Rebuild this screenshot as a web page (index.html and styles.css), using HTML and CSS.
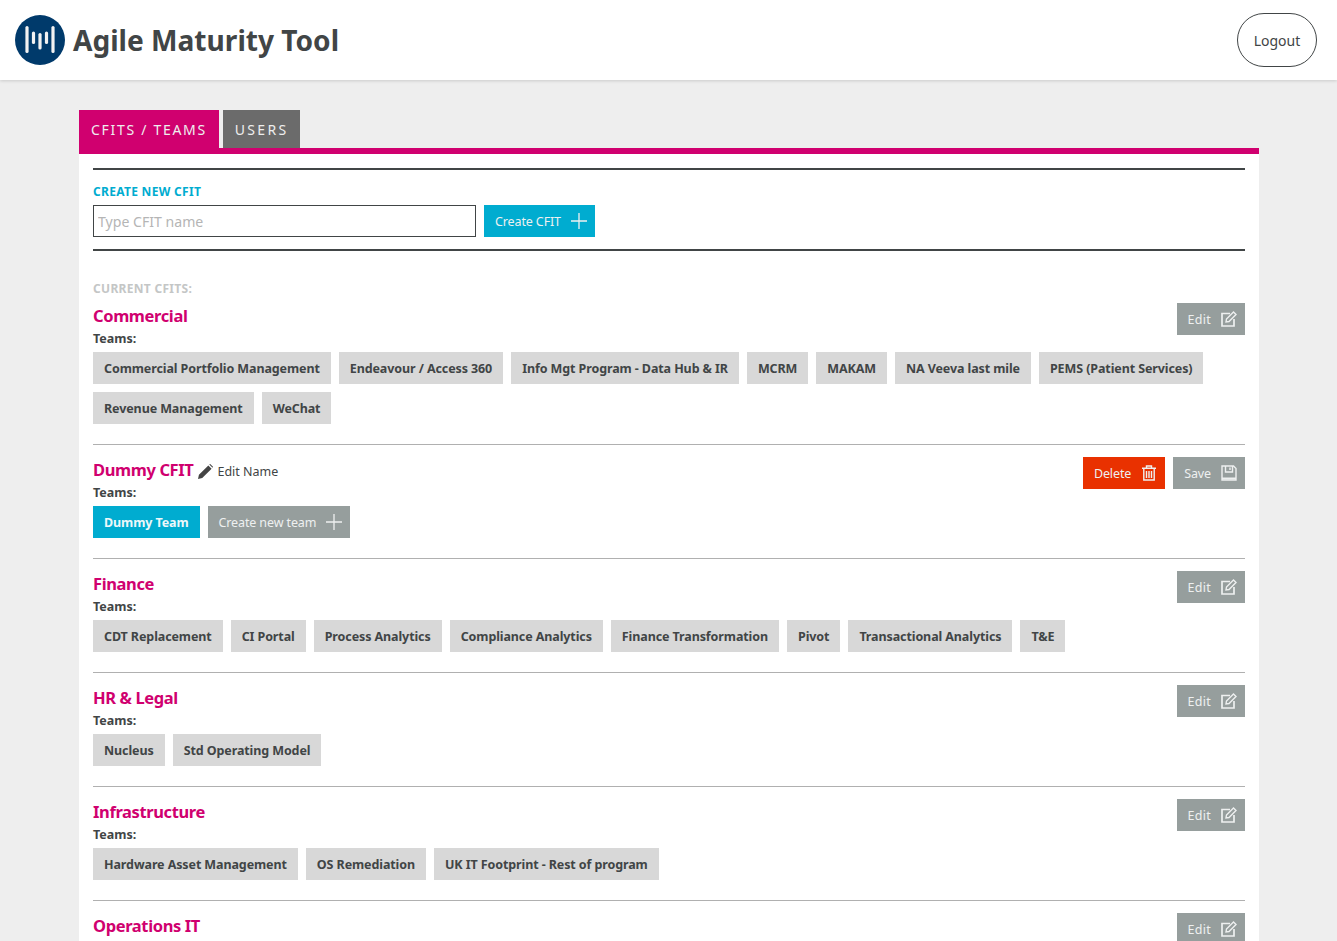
FILE: index.html
```html
<!DOCTYPE html>
<html lang="en">
<head>
    <meta charset="UTF-8">
    <title>Agile Maturity Tool</title>
    <link rel="stylesheet" href="styles.css">
</head>
<body>
    <svg class="icon-defs" width="0" height="0">
        <symbol id="i-plus" viewBox="0 0 16 16"><path d="M8 0v16M0 8h16" fill="none" stroke="currentColor" stroke-width="1.3"/></symbol>
        <symbol id="i-edit" viewBox="0 0 16 16"><path d="M9 2.500H1v12.500h12V8" fill="none" stroke="currentColor" stroke-width="1.700"/><path d="M5.500 8 12.500 1l2.500 2.500-7 7-3 .5z" fill="none" stroke="currentColor" stroke-width="1.400"/></symbol>
        <symbol id="i-trash" viewBox="0 0 14 16"><path d="M0 3.200h14M4.500 3V1h5v2M1.800 3.500V15h10.400V3.500M4.500 6v7M7 6v7M9.500 6v7" fill="none" stroke="currentColor" stroke-width="1.400"/></symbol>
        <symbol id="i-save" viewBox="0 0 16 16"><path d="M1 1h11.500L15 3.500V15H1zM4.500 1v6h7V1M9 2.500v2.500" fill="none" stroke="currentColor" stroke-width="1.400"/><path d="M1 13.500h14" stroke="currentColor" stroke-width="2"/></symbol>
    </svg>

    <header class="topbar">
        <div class="brand">
            <svg class="logo" viewBox="0 0 50 50">
                <circle cx="25" cy="25" r="25" fill="#003a6b"/>
                <g fill="none" stroke="#f2f2f2" stroke-linecap="round" stroke-width="3.200">
                    <path d="M12 12.500v24"/>
                    <path d="M18.500 18v9.500"/>
                    <path d="M25 19.500v13.500"/>
                    <path d="M31.500 18v9.500"/>
                    <path d="M38 12.500v24"/>
                </g>
            </svg>
            <h1>Agile Maturity Tool</h1>
        </div>
        <button class="logout">Logout</button>
    </header>

    <main class="page">
        <nav class="tabs">
            <a class="tab tab-active">CFITS / TEAMS</a>
            <a class="tab">USERS</a>
        </nav>

        <div class="panel">
            <section class="create">
                <label class="create-label">CREATE NEW CFIT</label>
                <div class="create-row">
                    <input class="cfit-input" type="text" placeholder="Type CFIT name">
                    <button class="btn btn-blue">Create CFIT <svg class="ic"><use href="#i-plus"/></svg></button>
                </div>
            </section>

            <h2 class="current-label">CURRENT CFITS:</h2>

            <article class="cfit">
                <div class="cfit-head">
                    <h3>Commercial</h3>
                    <button class="btn btn-grey btn-edit">Edit <svg class="ic"><use href="#i-edit"/></svg></button>
                </div>
                <p class="teams-label">Teams:</p>
                <div class="chips">
                    <span class="chip">Commercial Portfolio Management</span>
                    <span class="chip">Endeavour / Access 360</span>
                    <span class="chip">Info Mgt Program - Data Hub &amp; IR</span>
                    <span class="chip">MCRM</span>
                    <span class="chip">MAKAM</span>
                    <span class="chip">NA Veeva last mile</span>
                    <span class="chip">PEMS (Patient Services)</span>
                    <span class="chip">Revenue Management</span>
                    <span class="chip">WeChat</span>
                </div>
            </article>

            <article class="cfit">
                <div class="cfit-head">
                    <h3>Dummy CFIT</h3>
                    <svg class="pencil" viewBox="0 0 16 16"><path d="M0 16l1-4.500L11 1.500l3.500 3.500L4.500 15zM12 .5l1-.5 3 3-.5 1z" fill="#444"/></svg>
                    <span class="edit-name">Edit Name</span>
                    <div class="head-actions">
                        <button class="btn btn-red">Delete <svg class="ic"><use href="#i-trash"/></svg></button>
                        <button class="btn btn-grey">Save <svg class="ic"><use href="#i-save"/></svg></button>
                    </div>
                </div>
                <p class="teams-label">Teams:</p>
                <div class="chips">
                    <span class="chip chip-blue">Dummy Team</span>
                    <button class="btn btn-grey">Create new team <svg class="ic"><use href="#i-plus"/></svg></button>
                </div>
            </article>

            <article class="cfit">
                <div class="cfit-head">
                    <h3>Finance</h3>
                    <button class="btn btn-grey btn-edit">Edit <svg class="ic"><use href="#i-edit"/></svg></button>
                </div>
                <p class="teams-label">Teams:</p>
                <div class="chips">
                    <span class="chip">CDT Replacement</span>
                    <span class="chip">CI Portal</span>
                    <span class="chip">Process Analytics</span>
                    <span class="chip">Compliance Analytics</span>
                    <span class="chip">Finance Transformation</span>
                    <span class="chip">Pivot</span>
                    <span class="chip">Transactional Analytics</span>
                    <span class="chip">T&amp;E</span>
                </div>
            </article>

            <article class="cfit">
                <div class="cfit-head">
                    <h3>HR &amp; Legal</h3>
                    <button class="btn btn-grey btn-edit">Edit <svg class="ic"><use href="#i-edit"/></svg></button>
                </div>
                <p class="teams-label">Teams:</p>
                <div class="chips">
                    <span class="chip">Nucleus</span>
                    <span class="chip">Std Operating Model</span>
                </div>
            </article>

            <article class="cfit">
                <div class="cfit-head">
                    <h3>Infrastructure</h3>
                    <button class="btn btn-grey btn-edit">Edit <svg class="ic"><use href="#i-edit"/></svg></button>
                </div>
                <p class="teams-label">Teams:</p>
                <div class="chips">
                    <span class="chip">Hardware Asset Management</span>
                    <span class="chip">OS Remediation</span>
                    <span class="chip">UK IT Footprint - Rest of program</span>
                </div>
            </article>

            <article class="cfit">
                <div class="cfit-head">
                    <h3>Operations IT</h3>
                    <button class="btn btn-grey btn-edit">Edit <svg class="ic"><use href="#i-edit"/></svg></button>
                </div>
            </article>
        </div>
    </main>
</body>
</html>
```

FILE: styles.css
```css
html, body {
    height: 941px;
    overflow: hidden;
}
body {
    font-family: "Noto Sans", sans-serif;
    margin: 0;
    background-color: #eeeeee;
    color: #414546;
}
button, input {
    font-family: inherit;
}
.icon-defs {
    position: absolute;
}

.topbar {
    height: 80px;
    background: white;
    box-shadow: 0 1px 3px rgba(0, 0, 0, 0.15);
    display: flex;
    align-items: center;
    justify-content: space-between;
    padding: 0 20px 0 15px;
}
.brand {
    display: flex;
    align-items: center;
    gap: 8px;
}
.logo {
    width: 50px;
    height: 50px;
}
.brand h1 {
    margin: 0 0 1px;
    font-size: 28.100px;
    font-weight: 700;
}
.logout {
    width: 80px;
    height: 54px;
    border: 1px solid #414546;
    border-radius: 27px;
    background: white;
    color: #414546;
    font-size: 14px;
}

.page {
    margin: 30px 78px 0 79px;
}
.tabs {
    display: flex;
    gap: 4px;
    height: 38px;
}
.tab {
    display: block;
    padding: 0 12px;
    line-height: 39px;
    font-size: 14px;
    letter-spacing: 1.7px;
    color: #eee;
    background: #6b6b6b;
}
.tab + .tab {
    letter-spacing: 2.300px;
}
.tab-active {
    background: #d0006f;
}

.panel {
    background: white;
    border-top: 6px solid #d0006f;
    padding: 14px 14px 0;
}
.create {
    border-top: 2px solid #414546;
    border-bottom: 2px solid #414546;
    height: 83px;
    box-sizing: border-box;
    padding-top: 14px;
    margin-bottom: 30px;
}
.create-label {
    display: block;
    font-size: 12px;
    font-weight: 700;
    letter-spacing: 0.3px;
    color: #00acd0;
    line-height: 16px;
}
.create-row {
    display: flex;
    gap: 8px;
    margin-top: 5px;
}
.cfit-input {
    width: 383px;
    height: 32px;
    box-sizing: border-box;
    border: 1px solid #414546;
    padding: 0 4px;
    font-size: 14.100px;
    outline: none;
}
.cfit-input::placeholder {
    color: #b5b5b5;
}

.btn {
    height: 32px;
    border: 0;
    padding: 0 8px 0 11px;
    display: inline-flex;
    align-items: center;
    gap: 10px;
    font-size: 12.500px;
    letter-spacing: -0.12px;
    color: #eef0f0;
    white-space: nowrap;
}
.btn-edit {
    letter-spacing: 0.25px;
}
.btn-blue {
    background: #00acd0;
}
.btn-grey {
    background: #969e9d;
}
.btn-red {
    background: #e93100;
}
.ic {
    width: 16px;
    height: 16px;
}

.current-label {
    margin: 0 0 6px;
    font-size: 12px;
    font-weight: 700;
    letter-spacing: 0.3px;
    line-height: 16px;
    color: #c4c6c6;
}

.cfit {
    border-bottom: 1px solid #b0b0b0;
    padding-bottom: 20px;
    margin-bottom: 12px;
}
.cfit:last-child {
    border-bottom: 0;
}
.cfit-head {
    display: flex;
    align-items: flex-start;
    gap: 5px;
    height: 26px;
}
.cfit-head h3 {
    margin: 0;
    font-size: 16.500px;
    letter-spacing: -0.38px;
    line-height: 26px;
    font-weight: 700;
    color: #d0006f;
}
.cfit-head > .btn {
    margin-left: auto;
}
.head-actions {
    margin-left: auto;
    display: flex;
    gap: 8px;
}
.pencil {
    width: 15px;
    height: 15px;
    margin-top: 7px;
}
.edit-name {
    font-size: 12.500px;
    line-height: 30px;
    margin-left: -1px;
}
.teams-label {
    margin: 0 0 5px;
    padding-top: 2px;
    font-size: 12.500px;
    font-weight: 700;
    line-height: 16px;
}
.chips {
    display: flex;
    flex-wrap: wrap;
    gap: 8px;
}
.chip {
    height: 32px;
    line-height: 33px;
    padding: 0 11px;
    font-size: 12.500px;
    letter-spacing: -0.1px;
    font-weight: 700;
    background: #d8d8d8;
    white-space: nowrap;
}
.chip-blue {
    background: #00acd0;
    color: #eef8fa;
}
```
